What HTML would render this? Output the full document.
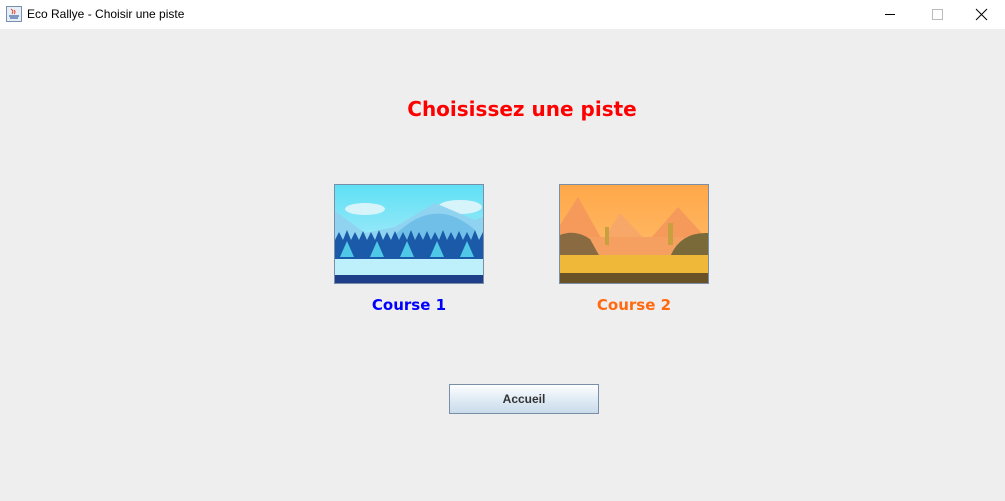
<!DOCTYPE html>
<html><head><style>
body{margin:0;width:1005px;height:501px;background:#eeeeee;font-family:"Liberation Sans",sans-serif;position:relative;overflow:hidden}
.tb{position:absolute;left:0;top:0;width:1005px;height:29px;background:#fff}
.tt{position:absolute;left:27px;top:7px;font-size:12px;color:#000}
.t{position:absolute;font-family:"DejaVu Sans",sans-serif;font-weight:bold}
.img{position:absolute;top:184px;width:148px;height:98px;border:1px solid #7a8ea8}
.btn{position:absolute;left:449px;top:384px;width:148px;height:28px;border:1px solid #7a8ea8;background:linear-gradient(#fdfeff,#dce8f3 60%,#c9dbea);font-size:12px;font-weight:bold;color:#333;text-align:center;line-height:29px}
</style></head><body>
<div class="tb">
<svg style="position:absolute;left:6px;top:6px" width="16" height="16"><rect x="0.5" y="0.5" width="15" height="15" fill="#e8eef6" stroke="#7890b0"/><path d="M5 3q3 2 1 5M8 4q2 2 0 4" stroke="#e0442a" fill="none"/><path d="M3 10h10M4 12h8" stroke="#3a66a8" stroke-width="1.3"/></svg>
<div class="tt">Eco Rallye - Choisir une piste</div>
<svg style="position:absolute;left:883px;top:8px" width="110" height="14"><path d="M2 6.5h10" stroke="#000"/><rect x="49.5" y="1.5" width="10" height="10" fill="none" stroke="#bbb"/><path d="M93 1l11 11M104 1l-11 11" stroke="#000"/></svg>
</div>
<div class="t" style="left:0;width:1044px;text-align:center;top:97px;font-size:20px;color:#ff0000">Choisissez une piste</div>
<svg class="img" style="left:334px" viewBox="0 0 148 98" preserveAspectRatio="none">
<defs><linearGradient id="s" x1="0" y1="0" x2="0" y2="1"><stop offset="0" stop-color="#5fe0f5"/><stop offset="1" stop-color="#c8f0fb"/></linearGradient></defs>
<rect width="148" height="98" fill="url(#s)"/>
<ellipse cx="30" cy="24" rx="20" ry="6" fill="#d8f4fb"/><ellipse cx="125" cy="22" rx="22" ry="7" fill="#d8f4fb"/>
<path d="M0 26L30 48 60 42 100 18 140 35 148 32V60H0z" fill="#8fd3f0"/>
<path d="M60 50Q100 10 140 45V60H60z" fill="#6fbfe8"/>
<path d="M0 55h148v25H0z" fill="#1a5aa8"/>
<path d="M0 55l4-8 4 8 4-10 4 10 4-8 4 8 4-9 4 9 4-8 4 8 4-10 4 10 4-8 4 8 4-9 4 9 4-8 4 8 4-10 4 10 4-8 4 8 4-9 4 9 4-8 4 8 4-10 4 10 4-8 4 8 4-9 4 9 4-8 4 8 4-10 4 10 4-8 4 8 4-9 4 9z" fill="#1a5aa8"/>
<path d="M5 72l7-16 7 16zM35 72l7-16 7 16zM65 72l7-16 7 16zM95 72l7-16 7 16zM125 72l7-16 7 16z" fill="#4fc8e8"/>
<rect y="74" width="148" height="16" fill="#bdf0fa"/>
<rect y="90" width="148" height="8" fill="#1e3e8a"/>
</svg>
<svg class="img" style="left:559px" viewBox="0 0 148 98" preserveAspectRatio="none">
<defs><linearGradient id="d" x1="0" y1="0" x2="0" y2="1"><stop offset="0" stop-color="#ffa84a"/><stop offset="1" stop-color="#ffc070"/></linearGradient></defs>
<rect width="148" height="98" fill="url(#d)"/>
<path d="M0 40L18 12 45 60H0z" fill="#f59a5a"/><path d="M40 60L60 28 90 60z" fill="#f7a868"/><path d="M85 60L118 22 148 55V60z" fill="#f59a5a"/>
<rect y="52" width="148" height="20" fill="#f5a060"/>
<path d="M0 72V50q15-6 30 4l10 18z" fill="#8a6a40"/><path d="M110 72q10-25 38-24V72z" fill="#7a6a3a"/>
<rect x="45" y="42" width="4" height="18" fill="#c8a040"/><rect x="108" y="38" width="5" height="22" fill="#c8a040"/>
<rect y="70" width="148" height="20" fill="#f0b838"/>
<rect y="88" width="148" height="10" fill="#6a5228"/>
</svg>
<div class="t" style="left:334px;width:150px;text-align:center;top:296px;font-size:15px;color:#0000ff">Course 1</div>
<div class="t" style="left:559px;width:150px;text-align:center;top:296px;font-size:15px;color:#ff6a10">Course 2</div>
<div class="btn">Accueil</div>
</body></html>
